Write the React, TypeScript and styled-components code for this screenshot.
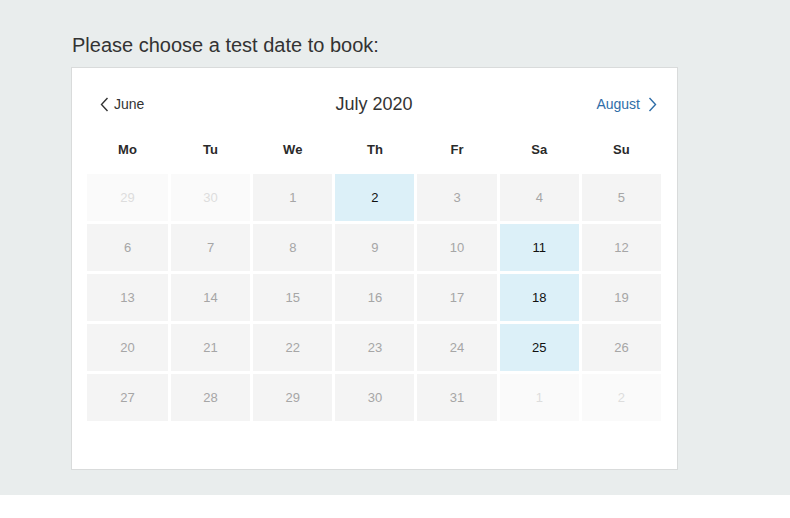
import React from "react";
import styled, { createGlobalStyle } from "styled-components";

const Global = createGlobalStyle`
  html, body { margin: 0; padding: 0; background: #ffffff; }
  body { font-family: "Liberation Sans", Arial, sans-serif; }
`;

const Page = styled.div`
  background: #e9eded;
  padding: 33px 0 25px 71px;
`;

const Title = styled.h1`
  margin: 0 0 10px 1px;
  font-size: 20px;
  line-height: 24px;
  font-weight: normal;
  color: #333333;
`;

const Card = styled.div`
  width: 574px;
  background: #ffffff;
  border: 1px solid #d9dbdb;
  padding: 20px 16px 48px 15px;
`;

const Nav = styled.div`
  height: 32px;
  display: flex;
  align-items: center;
  justify-content: space-between;
`;

const NavLink = styled.a<{ $next?: boolean }>`
  display: flex;
  align-items: center;
  gap: ${(p) => (p.$next ? "8px" : "5px")};
  font-size: 14px;
  color: ${(p) => (p.$next ? "#2f6ea8" : "#333333")};
  cursor: pointer;
  width: 120px;
  justify-content: ${(p) => (p.$next ? "flex-end" : "flex-start")};
  padding: ${(p) => (p.$next ? "0 4px 0 0" : "0 0 0 13px")};
  box-sizing: border-box;
`;

const MonthTitle = styled.div`
  font-size: 18px;
  color: #333333;
`;

const columns = "81px repeat(6, 1fr)";

const WeekRow = styled.div`
  display: grid;
  grid-template-columns: ${columns};
  gap: 3px;
  height: 50px;
  margin-top: 4px;
  align-items: center;
`;

const WeekDay = styled.div`
  text-align: center;
  font-weight: bold;
  font-size: 13px;
  color: #2a2a2a;
`;

const Grid = styled.div`
  display: grid;
  grid-template-columns: ${columns};
  grid-auto-rows: 47px;
  gap: 3px;
`;

type Kind = "out" | "off" | "on";

const Day = styled.div<{ $kind: Kind }>`
  display: flex;
  align-items: center;
  justify-content: center;
  font-size: 13px;
  background: ${(p) =>
    p.$kind === "on" ? "#dcf0f8" : p.$kind === "out" ? "#fafafa" : "#f4f4f4"};
  color: ${(p) =>
    p.$kind === "on" ? "#111111" : p.$kind === "out" ? "#dddddd" : "#a6a6a6"};
  cursor: ${(p) => (p.$kind === "on" ? "pointer" : "default")};
`;

const Chevron = ({ dir, color }: { dir: "left" | "right"; color: string }) => (
  <svg width="9" height="15" viewBox="0 0 9 15" fill="none">
    <polyline
      points={dir === "left" ? "7.5,1 1.5,7.5 7.5,14" : "1.5,1 7.5,7.5 1.5,14"}
      stroke={color}
      strokeWidth="1.4"
    />
  </svg>
);

const weekdays = ["Mo", "Tu", "We", "Th", "Fr", "Sa", "Su"];

const days: { n: number; k: Kind }[] = [
  { n: 29, k: "out" },
  { n: 30, k: "out" },
  ...Array.from({ length: 31 }, (_, i) => {
    const n = i + 1;
    const k: Kind = [2, 11, 18, 25].includes(n) ? "on" : "off";
    return { n, k };
  }),
  { n: 1, k: "out" },
  { n: 2, k: "out" },
];

export default function App() {
  return (
    <>
      <Global />
      <Page>
        <Title>Please choose a test date to book:</Title>
        <Card>
          <Nav>
            <NavLink>
              <Chevron dir="left" color="#333333" />
              June
            </NavLink>
            <MonthTitle>July 2020</MonthTitle>
            <NavLink $next>
              August
              <Chevron dir="right" color="#2f6ea8" />
            </NavLink>
          </Nav>
          <WeekRow>
            {weekdays.map((w) => (
              <WeekDay key={w}>{w}</WeekDay>
            ))}
          </WeekRow>
          <Grid>
            {days.map((d, i) => (
              <Day key={i} $kind={d.k}>
                {d.n}
              </Day>
            ))}
          </Grid>
        </Card>
      </Page>
    </>
  );
}
